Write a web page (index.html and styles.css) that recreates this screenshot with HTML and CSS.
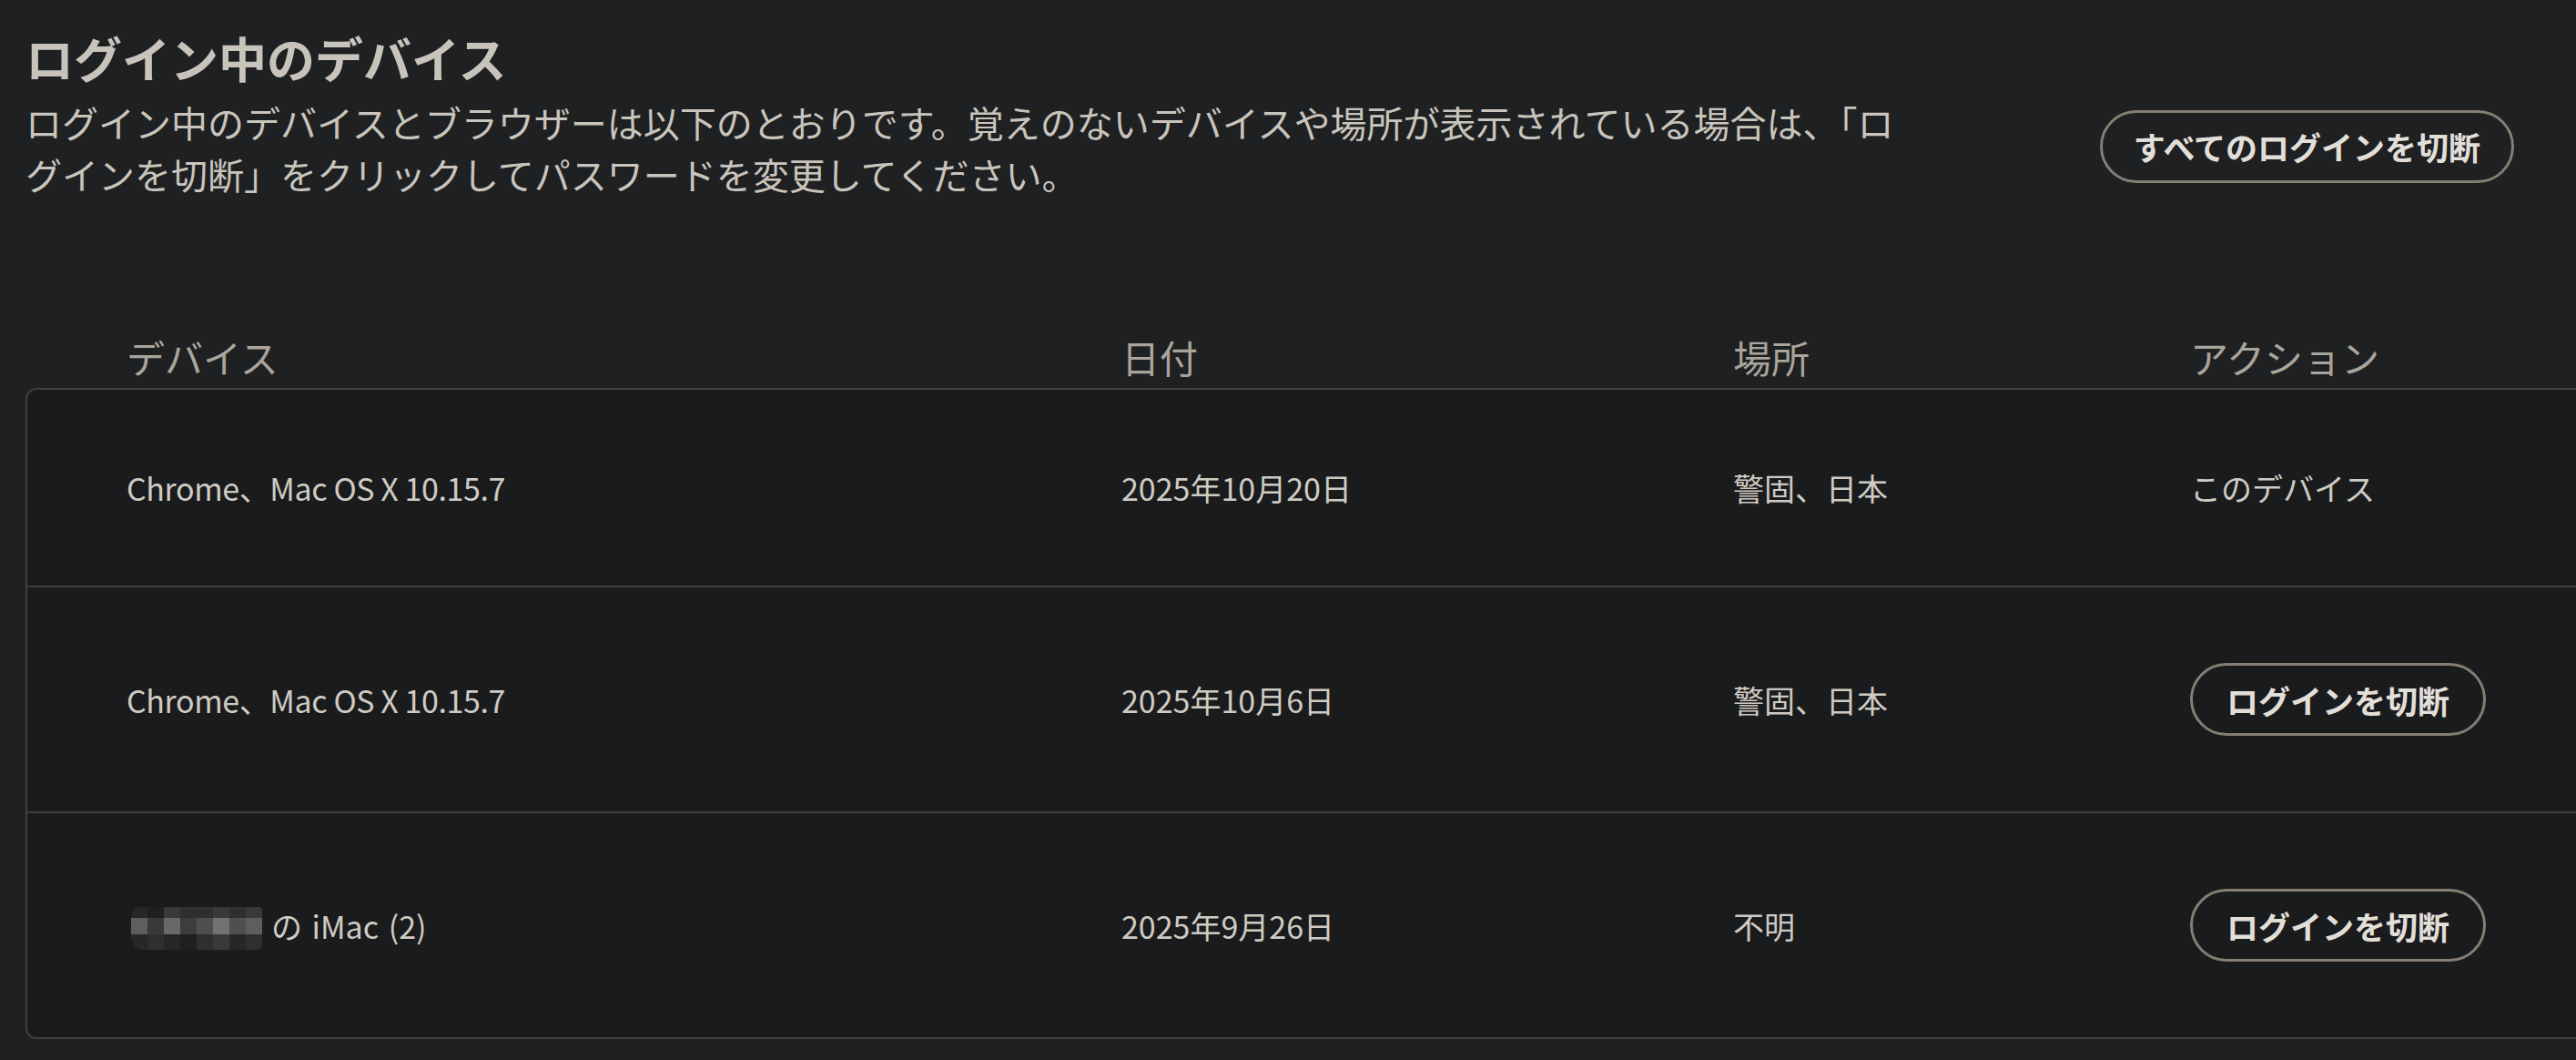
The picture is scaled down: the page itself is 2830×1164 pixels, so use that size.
FILE: index.html
```html
<!DOCTYPE html>
<html lang="ja">
<head>
<meta charset="utf-8">
<title>ログイン中のデバイス</title>
<link rel="stylesheet" href="styles.css">
</head>
<body>
<div class="page">
  <h1 class="title">ログイン中のデバイス</h1>
  <div class="intro">
    <p class="desc">ログイン中のデバイスとブラウザーは以下のとおりです。覚えのないデバイスや場所が表示されている場合は、「ログインを切断」をクリックしてパスワードを変更してください。</p>
    <button class="pill pill-top" type="button">すべてのログインを切断</button>
  </div>

  <div class="table">
    <div class="thead">
      <div>デバイス</div>
      <div>日付</div>
      <div>場所</div>
      <div>アクション</div>
    </div>
    <div class="tbody">
      <div class="row">
        <div class="latin">Chrome、Mac OS X 10.15.7</div>
        <div>2025年10月20日</div>
        <div>警固、日本</div>
        <div>このデバイス</div>
      </div>
      <div class="row">
        <div class="latin">Chrome、Mac OS X 10.15.7</div>
        <div>2025年10月6日</div>
        <div>警固、日本</div>
        <div><button class="pill" type="button">ログインを切断</button></div>
      </div>
      <div class="row">
        <div class="device"><span class="mosaic" aria-hidden="true"><i class="a"></i><i class="z"></i><i class="c"></i><i class="b"></i><i class="b"></i><i class="c"></i><i class="b"></i><i class="c"></i><i class="f"></i><i class="c"></i><i class="g"></i><i class="d"></i><i class="e"></i><i class="h"></i><i class="e"></i><i class="f"></i><i class="a"></i><i class="b"></i><i class="a"></i><i class="z"></i><i class="b"></i><i class="c"></i><i class="a"></i><i class="b"></i></span><span class="owner">の iMac (2)</span></div>
        <div>2025年9月26日</div>
        <div>不明</div>
        <div><button class="pill" type="button">ログインを切断</button></div>
      </div>
    </div>
  </div>
</div>
</body>
</html>
```

FILE: styles.css
```css
html, body {
  margin: 0;
  padding: 0;
  background: #1f2022;
  overflow: hidden;
}

body {
  font-family: "Noto Sans CJK JP", "Noto Sans", sans-serif;
  color: #cbc7bf;
}

.page {
  padding: 37px 0 0 28px;
}

.title {
  margin: 0;
  font-size: 53px;
  line-height: 52px;
  font-weight: 700;
  color: #c8c4bc;
}

.intro {
  display: flex;
  align-items: center;
  justify-content: space-between;
  margin-top: 17px;
  padding-right: 68px;
}

.desc {
  margin: 0;
  max-width: 2068px;
  font-size: 40px;
  line-height: 57px;
  color: #c9c5bd;
}

.pill {
  box-sizing: border-box;
  height: 80px;
  padding: 0 37px;
  border: 3px solid #857e72;
  border-radius: 40px;
  background: transparent;
  color: #e2dfd9;
  font-family: "Noto Sans CJK JP", "Noto Sans", sans-serif;
  font-size: 35px;
  font-weight: 700;
  line-height: 1;
  white-space: nowrap;
  cursor: pointer;
}

.pill-top {
  margin-bottom: 5px;
  padding: 0 34px;
}

.table {
  margin-top: 148px;
}

.thead,
.row {
  display: grid;
  grid-template-columns: 1093px 672px 502px 1fr;
  align-items: center;
}

.thead {
  padding-left: 111px;
  margin-bottom: 10px;
  font-size: 42px;
  line-height: 48px;
  color: #aaa59c;
}

.tbody {
  width: 2900px;
  border: 2px solid #3e3f41;
  border-radius: 12px;
  background: #1a1b1d;
}

.row {
  padding: 83px 0 83px 109px;
  font-size: 34px;
  line-height: 49px;
  color: #cfcbc3;
}

.row + .row {
  border-top: 2px solid #3e3f41;
}

.latin {
  letter-spacing: -0.4px;
}

.device {
  display: flex;
  align-items: center;
}

.owner {
  word-spacing: 3px;
}

.mosaic {
  display: grid;
  grid-template-columns: repeat(8, 18px);
  grid-template-rows: 12px 18px 17px;
  margin: 6px 10px 0 5px;
  border-radius: 10px 4px 6px 14px;
  overflow: hidden;
}

.mosaic i { display: block; }
.mosaic .z { background: #1e1f21; }
.mosaic .a { background: #262729; }
.mosaic .b { background: #2e2f30; }
.mosaic .c { background: #39393a; }
.mosaic .d { background: #3d3d3e; }
.mosaic .e { background: #4f4f4f; }
.mosaic .f { background: #5e5e5d; }
.mosaic .g { background: #6a6967; }
.mosaic .h { background: #737270; }
```
